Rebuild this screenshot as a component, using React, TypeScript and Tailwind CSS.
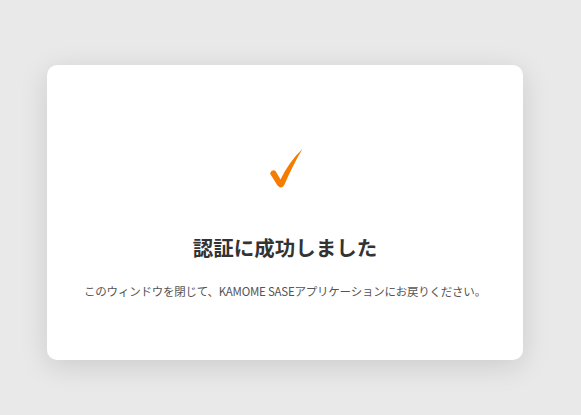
export default function App() {
  return (
    <div className="flex min-h-screen items-center justify-center bg-[#e9e9e9] pr-[11px] pt-[10px] font-['Noto_Sans_CJK_JP',sans-serif]">
      <div className="flex h-[295px] w-[476px] flex-col items-center rounded-[10px] bg-white pt-[83px] shadow-[0_6px_28px_rgba(0,0,0,0.13)]">
        <svg width="34" height="40" viewBox="0 0 34 40" className="ml-[1px]">
          <path
            d="M1 25.5 Q3 20.5 6.5 23 L11.5 31.5 Q20 14 33.5 0.8 Q24 17 15 37.5 Q12 41.5 8.5 37.5 Z"
            fill="#f57c00"
          />
        </svg>
        <h1 className="mt-[45px] text-[20.5px] font-bold leading-[28px] text-[#333]">
          認証に成功しました
        </h1>
        <p className="mt-[20px] text-[11.5px] leading-[20px] tracking-[-0.02em] text-[#555]">
          このウィンドウを閉じて、KAMOME SASEアプリケーションにお戻りください。
        </p>
      </div>
    </div>
  );
}
